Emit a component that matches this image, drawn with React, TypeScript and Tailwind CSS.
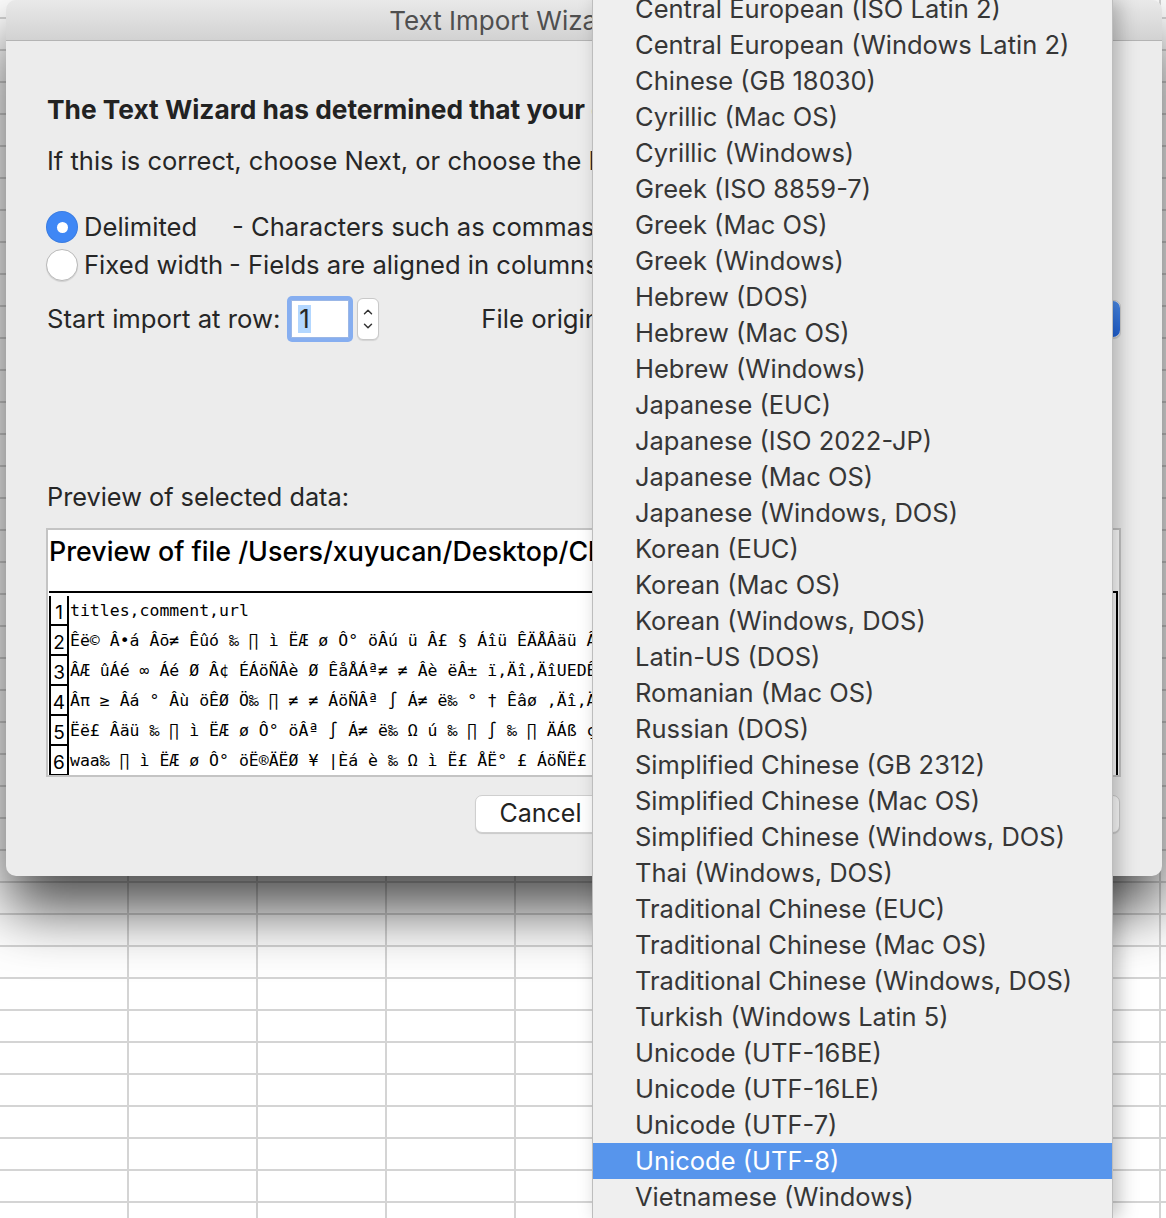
import { ChevronUp, ChevronDown } from "lucide-react";

const encodings = [
  "Central European (ISO Latin 2)",
  "Central European (Windows Latin 2)",
  "Chinese (GB 18030)",
  "Cyrillic (Mac OS)",
  "Cyrillic (Windows)",
  "Greek (ISO 8859-7)",
  "Greek (Mac OS)",
  "Greek (Windows)",
  "Hebrew (DOS)",
  "Hebrew (Mac OS)",
  "Hebrew (Windows)",
  "Japanese (EUC)",
  "Japanese (ISO 2022-JP)",
  "Japanese (Mac OS)",
  "Japanese (Windows, DOS)",
  "Korean (EUC)",
  "Korean (Mac OS)",
  "Korean (Windows, DOS)",
  "Latin-US (DOS)",
  "Romanian (Mac OS)",
  "Russian (DOS)",
  "Simplified Chinese (GB 2312)",
  "Simplified Chinese (Mac OS)",
  "Simplified Chinese (Windows, DOS)",
  "Thai (Windows, DOS)",
  "Traditional Chinese (EUC)",
  "Traditional Chinese (Mac OS)",
  "Traditional Chinese (Windows, DOS)",
  "Turkish (Windows Latin 5)",
  "Unicode (UTF-16BE)",
  "Unicode (UTF-16LE)",
  "Unicode (UTF-7)",
  "Unicode (UTF-8)",
  "Vietnamese (Windows)",
];

const selected = "Unicode (UTF-8)";

const previewRows = [
  "titles,comment,url",
  "Êë© Â•á Âõ≠ Êûó ‰ ∏ ì ËÆ ø Ô° öÂú ü Â£ § Áîü ÊÄÅÂäü ÂÖ•Áª¥ Áé Ø Â¢ É ‰ ∏ Ä ÁöÑ ÂÖ± Â≠ ò ÁªÑÁªá",
  "ÂÆ ûÁé ∞ Áé Ø Â¢ ÉÁöÑÂè Ø ÊåÅÁª≠ ≠ Âè ëÂ± ï‚Äî‚ÄîUEDÊ ú ∫ ÊûÑ ÁöÑ ËÆ æ ËÆ° ‰ Ω ú ÂìÅ ‰ ªã Áªç",
  "Âπ ≥ Âá ° Âù öÊØ Ö‰ ∏ ≠ ≠ ÁöÑÂª ∫ Á≠ ë‰ ° † Êâø ‚Äî‚ÄîÊú Ä Ëø ë ÁöÑ Âª ∫ Á≠ ë",
  "Ëë£ Âäü ‰ ∏ ì ËÆ ø Ô° öÂª ∫ Á≠ ë‰ Ω ú ‰ ∏ ∫ ‰ ∏ ÄÁß ç ÂèØ Ëßā ÁöÑ Áâ© Ë¥®",
  "waa‰ ∏ ì ËÆ ø Ô° öË®ÄËØ ¥ |Èá è ‰ Ω ì Ë£ ÅË° £ ÁöÑË£ Ö È• ∞ ÂíåÁªÜ ËäÇ",
];

function SpreadsheetGrid() {
  const rows = Array.from({ length: 40 });
  const cols = Array.from({ length: 10 });
  return (
    <div className="-mt-[13px] flex flex-col">
      {rows.map((_, r) => (
        <div key={r} className="flex h-[32px] shrink-0">
          {cols.map((_, c) => (
            <div
              key={c}
              className="h-[32px] w-[129px] shrink-0 border-b-2 border-r-2 border-[#d4d4d4]"
            />
          ))}
        </div>
      ))}
    </div>
  );
}

function Radio({ checked }: { checked: boolean }) {
  if (checked) {
    return (
      <div className="flex h-[32px] w-[32px] shrink-0 items-center justify-center rounded-full bg-[#3f87f5] shadow-[inset_0_0_0_1px_rgba(0,0,0,0.08)]">
        <div className="h-[11px] w-[11px] rounded-full bg-white" />
      </div>
    );
  }
  return (
    <div className="h-[32px] w-[32px] shrink-0 rounded-full border border-[#b9b9b9] bg-white shadow-[0_1px_1px_rgba(0,0,0,0.12)]" />
  );
}

function Button({ label, w }: { label: string; w: string }) {
  return (
    <div
      className={`flex h-[38px] ${w} items-center justify-center rounded-[7px] border border-[#cfcfcf] bg-white text-[25px] text-[#222] shadow-[0_1px_1px_rgba(0,0,0,0.15)]`}
    >
      {label}
    </div>
  );
}

export default function App() {
  return (
    <div className="relative h-[1218px] w-[1166px] overflow-hidden bg-white font-['Inter','Liberation_Sans',sans-serif]">
      {/* spreadsheet behind */}
      <SpreadsheetGrid />

      {/* Text Import Wizard sheet */}
      <div className="absolute left-[6px] top-0 flex h-[876px] w-[1156px] flex-col overflow-hidden rounded-[10px] bg-[#ececec] shadow-[0_34px_60px_rgba(0,0,0,0.7)]">
        <div className="flex h-[41px] shrink-0 items-center justify-center border-b border-[#b4b4b4] bg-gradient-to-b from-[#e9e9e9] to-[#d2d2d2] text-[26px] text-[#4f4f4f]">
          Text Import Wizard - Step 1 of 3
        </div>

        <div className="flex flex-col pl-[41px] pr-[41px] text-[#262626]">
          <p className="mt-[54px] whitespace-nowrap text-[26.3px] font-bold leading-[30px] text-[#222]">
            The Text Wizard has determined that your data is Delimited.
          </p>
          <p className="mt-[21px] whitespace-nowrap text-[25.5px] leading-[30px]">
            If this is correct, choose Next, or choose the Data Type that best describes your data.
          </p>

          <div className="-ml-px mt-[35px] flex h-[32px] items-center text-[25.6px]">
            <Radio checked />
            <span className="ml-[6px] w-[148px] shrink-0">Delimited</span>
            <span className="whitespace-nowrap">- Characters such as commas or tabs separate each field.</span>
          </div>
          <div className="-ml-px mt-[6px] flex h-[32px] items-center text-[25.6px]">
            <Radio checked={false} />
            <span className="ml-[6px] w-[145px] shrink-0">Fixed width</span>
            <span className="whitespace-nowrap">- Fields are aligned in columns with spaces between each field.</span>
          </div>

          <div className="mt-[15px] flex h-[46px] items-center text-[25.7px]">
            <span className="whitespace-nowrap">Start import at row:</span>
            <div className="ml-[7px] flex h-[46px] w-[66px] items-center rounded-[5px] bg-[#86aef0] p-[4px]">
              <div className="flex h-full w-full items-center border border-[#9bb7e6] bg-white pl-[6px]">
                <span className="bg-[#b3d7ff] px-px leading-[28px]">1</span>
              </div>
            </div>
            <div className="ml-[4px] flex h-[42px] w-[22px] flex-col items-center justify-center rounded-[6px] border border-[#c9c9c9] bg-white text-[#333] shadow-[0_1px_1px_rgba(0,0,0,0.1)]">
              <ChevronUp size={14} strokeWidth={2.5} />
              <ChevronDown size={14} strokeWidth={2.5} />
            </div>
            <span className="ml-[102px] whitespace-nowrap">File origin:</span>
            <div className="ml-[20px] flex h-[38px] flex-1 items-center rounded-[7px] border border-[#cfcfcf] bg-white pl-[10px] shadow-[0_1px_1px_rgba(0,0,0,0.15)]">
              <span className="flex-1 whitespace-nowrap">Unicode (UTF-8)</span>
              <div className="flex h-full w-[30px] items-center justify-center rounded-r-[7px] bg-gradient-to-b from-[#4d8ff0] to-[#1f62d9] text-white" />
            </div>
          </div>

          <p className="mt-[140px] whitespace-nowrap text-[25.3px] leading-[30px]">Preview of selected data:</p>

          <div className="-ml-px mt-[16px] h-[249px] w-[1075px] overflow-hidden border-2 border-[#c4c4c4] bg-white">
            <div className="h-[61px] whitespace-nowrap pl-[1px] pt-[5px] text-[26.8px] font-medium leading-[32px] text-black">
              Preview of file /Users/xuyucan/Desktop/ChineseComments.csv
            </div>
            <div className="ml-px mr-px border-t-2 border-r-2 border-black pt-[3px]">
              {previewRows.map((row, i) => (
                <div key={i} className="flex h-[30px]">
                  <div className="flex w-[20px] shrink-0 items-end justify-center border-x-2 border-b-2 border-black text-[19px] leading-[22px] text-black">
                    {i + 1}
                  </div>
                  <div className="flex-1 overflow-hidden whitespace-nowrap pl-[1px] font-['DejaVu_Sans_Mono',monospace] text-[16.5px] leading-[30px] text-black">
                    {row}
                  </div>
                </div>
              ))}
            </div>
          </div>

          <div className="mt-[18px] flex justify-end pr-[1px]">
            <Button label="Cancel" w="w-[131px]" />
            <div className="w-[104px]" />
            <Button label="< Back" w="w-[130px]" />
            <div className="w-[10px]" />
            <Button label="Next >" w="w-[130px]" />
            <div className="w-[10px]" />
            <Button label="Finish" w="w-[130px]" />
          </div>
        </div>
      </div>

      {/* encoding popup menu */}
      <div className="absolute left-[592px] top-0 h-[1218px] w-[521px] overflow-hidden border-x border-[#bdbdbd] bg-[#efefef] shadow-[6px_0_18px_rgba(0,0,0,0.25)]">
        <ul className="-mt-[9px] flex flex-col">
          {encodings.map((e) => (
            <li
              key={e}
              className={
                e === selected
                  ? "flex h-[36px] items-center whitespace-nowrap bg-[#5795ec] pl-[42px] text-[25.5px] text-white"
                  : "flex h-[36px] items-center whitespace-nowrap pl-[42px] text-[25.5px] text-[#363636]"
              }
            >
              {e}
            </li>
          ))}
        </ul>
      </div>
    </div>
  );
}
